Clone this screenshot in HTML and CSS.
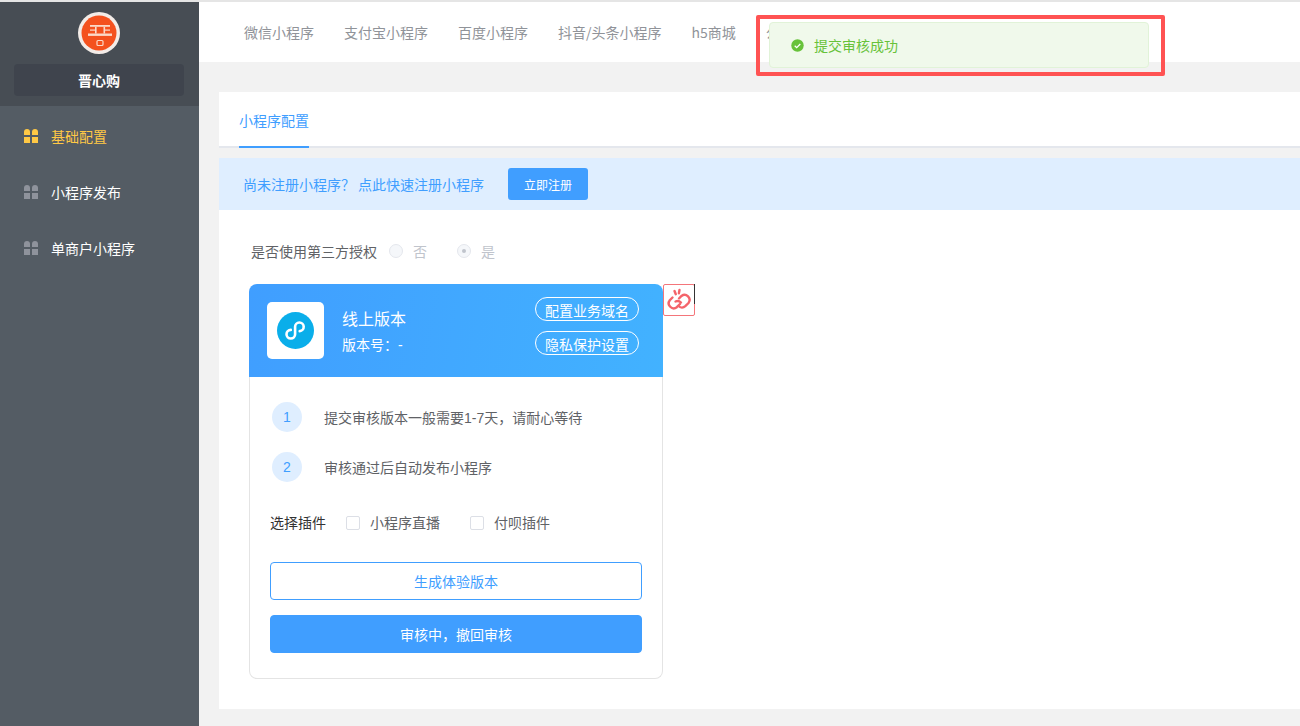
FILE: index.html
```html
<!DOCTYPE html>
<html lang="en">
<head>
    <meta charset="UTF-8">
    <meta name="viewport" content="width=device-width, initial-scale=1.0">
    <title>小程序配置</title>
    <link rel="stylesheet" href="styles.css">
</head>
<body>
    <div class="app">
        <aside class="sidebar">
            <div class="brand">
                <svg class="brand-logo" viewBox="0 0 42 42">
                    <circle cx="21" cy="21" r="21" fill="#f3ece8"/>
                    <circle cx="21" cy="21" r="17.5" fill="#f4511e"/>
                    <g fill="#fbd9c8">
                        <rect x="12" y="13" width="20" height="1.8"/>
                        <rect x="10" y="21.5" width="24" height="2.4"/>
                        <rect x="17" y="14.8" width="1.6" height="6.7"/>
                        <rect x="25.5" y="14.8" width="1.6" height="6.7"/>
                        <rect x="12" y="17.5" width="5" height="1.2"/>
                        <rect x="27" y="17.5" width="5" height="1.2"/>
                    </g>
                    <rect x="19" y="28.5" width="6" height="5" rx="1" fill="none" stroke="#fbd9c8" stroke-width="1.2"/>
                </svg>
                <div class="brand-name">晋心购</div>
            </div>
            <nav class="menu">
                <a class="menu-item active"><span class="grid-icon"><i></i><i></i><i></i><i></i></span>基础配置</a>
                <a class="menu-item"><span class="grid-icon"><i></i><i></i><i></i><i></i></span>小程序发布</a>
                <a class="menu-item"><span class="grid-icon"><i></i><i></i><i></i><i></i></span>单商户小程序</a>
            </nav>
        </aside>
        <main class="main">
            <div class="top-tabs">
                <a>微信小程序</a>
                <a>支付宝小程序</a>
                <a>百度小程序</a>
                <a>抖音/头条小程序</a>
                <a>h5商城</a>
                <a>公众号</a>
            </div>
            <div class="content">
                <div class="panel-tabs">
                    <span class="panel-tab">小程序配置</span>
                </div>
                <div class="notice">
                    <span>尚未注册小程序？</span>
                    <span class="notice-link">点此快速注册小程序</span>
                    <button class="notice-btn">立即注册</button>
                </div>
                <div class="panel-body">
                    <div class="auth-row">
                        <span class="auth-label">是否使用第三方授权</span>
                        <span class="radio"></span><span class="radio-text">否</span>
                        <span class="radio checked"></span><span class="radio-text">是</span>
                    </div>
                    <div class="version-card">
                        <div class="card-head">
                            <div class="app-icon">
                                <svg viewBox="0 0 37 37" width="37" height="37">
                                    <circle cx="18.5" cy="18.5" r="18.5" fill="#0aaeea"/>
                                    <path d="M13.8 17.9a4.3 4.3 0 1 0 4.3 4.3v-7.4a4.3 4.3 0 1 1 4.6 4.3" fill="none" stroke="#fff" stroke-width="2.6" stroke-linecap="round"/>
                                </svg>
                            </div>
                            <div class="card-info">
                                <div class="card-title">线上版本</div>
                                <div class="card-version">版本号：-</div>
                            </div>
                            <div class="card-links">
                                <a>配置业务域名</a>
                                <a>隐私保护设置</a>
                            </div>
                        </div>
                        <div class="card-body">
                            <div class="step"><span class="step-num">1</span>提交审核版本一般需要1-7天，请耐心等待</div>
                            <div class="step"><span class="step-num">2</span>审核通过后自动发布小程序</div>
                            <div class="plugins">
                                <span class="plugins-label">选择插件</span>
                                <span class="checkbox"></span><span class="plugin-name">小程序直播</span>
                                <span class="checkbox"></span><span class="plugin-name">付呗插件</span>
                            </div>
                            <button class="btn btn-outline">生成体验版本</button>
                            <button class="btn btn-solid">审核中，撤回审核</button>
                        </div>
                        <div class="link-badge">
                            <svg viewBox="0 0 30 30" width="30" height="30">
                                <g fill="none" stroke="#f4646a" stroke-width="2.4" stroke-linecap="round">
                                    <path d="M8.5 12.5l-2.7 2.7a5 5 0 0 0 7 7l3.2-3.2"/>
                                    <path d="M11.5 16.5a5 5 0 0 1 5.5 1"/>
                                    <path d="M15 13.5l2.5-2.5a5 5 0 0 1 7 7l-3.2 3.2a5 5 0 0 1-6.8-.2"/>
                                    <path d="M10.5 6l1.3 3.2M15.5 5l-.6 3.2"/>
                                </g>
                            </svg>
                        </div>
                    </div>
                </div>
            </div>
        </main>
    </div>

    <div class="toast-mark">
        <div class="toast">
            <svg viewBox="0 0 13 13" width="13" height="13">
                <circle cx="6.5" cy="6.5" r="6.2" fill="#67c23a"/>
                <path d="M3.7 6.7l2 1.9 3.6-3.6" fill="none" stroke="#fff" stroke-width="1.3"/>
            </svg>
            <span>提交审核成功</span>
        </div>
    </div>
</body>
</html>
```

FILE: styles.css
```css
* {
    box-sizing: border-box;
}

html,
body {
    margin: 0;
    height: 726px;
    overflow: hidden;
}

body {
    font-family: "Liberation Sans", "Noto Sans CJK SC", sans-serif;
    font-size: 14px;
    color: #606266;
    background-color: #f2f2f2;
    border-top: 2px solid #e5e5e5;
}

.app {
    display: flex;
    height: 724px;
}

/* sidebar */
.sidebar {
    width: 199px;
    flex-shrink: 0;
    background-color: #545c64;
}

.brand {
    height: 104px;
    padding: 10px 15px 0 14px;
    background-color: #474d54;
}

.brand-logo {
    display: block;
    width: 42px;
    height: 42px;
    margin: 0 auto 10px auto;
}

.brand-name {
    width: 170px;
    height: 32px;
    line-height: 34px;
    text-align: center;
    color: #fff;
    font-weight: bold;
    background-color: #3f444d;
    border-radius: 4px;
}

.menu {
    padding-top: 2px;
}

.menu-item {
    display: flex;
    align-items: center;
    height: 56px;
    padding-left: 24px;
    color: #fff;
}

.menu-item.active {
    color: #ffc845;
}

.grid-icon {
    display: grid;
    grid-template-columns: 6px 6px;
    grid-template-rows: 6px 6px;
    gap: 2px;
    width: 14px;
    margin-right: 13px;
}

.grid-icon i {
    background-color: #8f939c;
}

.grid-icon i:nth-child(-n+2) {
    border-radius: 3px 3px 0 0;
}

.active .grid-icon i {
    background-color: #ffc845;
}

/* top tabs */
.main {
    flex: 1;
    min-width: 0;
}

.top-tabs {
    display: flex;
    gap: 30px;
    height: 60px;
    padding-left: 45px;
    line-height: 60px;
    font-family: "Noto Sans CJK SC", sans-serif;
    color: #909399;
    background-color: #fff;
}

.content {
    height: 647px;
    margin: 30px 0 0 20px;
    background-color: #f2f2f2;
}

.panel-tabs {
    height: 56px;
    padding-left: 20px;
    background-color: #fff;
    border-bottom: 2px solid #e4e7ed;
}

.panel-tab {
    display: block;
    width: 70px;
    height: 56px;
    line-height: 58px;
    color: #409eff;
    border-bottom: 2px solid #409eff;
}

.notice {
    display: flex;
    align-items: center;
    height: 52px;
    margin-top: 10px;
    padding-left: 24px;
    color: #409eff;
    background-color: #dfeeff;
}

.notice-link {
    margin-left: 3px;
}

.notice-btn {
    width: 80px;
    height: 32px;
    margin-left: 24px;
    padding: 0;
    border: none;
    border-radius: 3px;
    color: #fff;
    font-family: inherit;
    font-size: 12px;
    background-color: #409eff;
}

.panel-body {
    height: 499px;
    padding: 31px 0 0 30px;
    background-color: #fff;
}

.auth-row {
    display: flex;
    align-items: center;
    height: 20px;
    margin-bottom: 23px;
    padding-left: 2px;
}

.auth-label {
    margin-right: 12px;
}

.radio {
    width: 14px;
    height: 14px;
    border: 1px solid #e4e7ed;
    border-radius: 50%;
    background-color: #f5f7fa;
    margin-right: 10px;
}

.radio.checked {
    position: relative;
}

.radio.checked::after {
    content: "";
    position: absolute;
    top: 4px;
    left: 4px;
    width: 4px;
    height: 4px;
    border-radius: 50%;
    background-color: #c0c4cc;
}

.radio-text {
    width: 44px;
    color: #c0c4cc;
}

/* version card */
.version-card {
    position: relative;
    width: 414px;
}

.card-head {
    display: flex;
    align-items: center;
    height: 93px;
    padding: 0 24px 0 18px;
    color: #fff;
    border-radius: 8px 8px 0 0;
    background: linear-gradient(100deg, #409eff, #42b2ff);
}

.app-icon {
    display: flex;
    align-items: center;
    justify-content: center;
    width: 57px;
    height: 57px;
    border-radius: 5px;
    background-color: #fff;
}

.card-info {
    flex: 1;
    margin-left: 18px;
    padding-top: 2px;
}

.card-title {
    font-size: 16px;
    line-height: 24px;
    margin-bottom: 3px;
}

.card-version {
    line-height: 20px;
}

.card-links {
    display: flex;
    flex-direction: column;
    gap: 10px;
    align-self: flex-start;
    margin-top: 13px;
}

.card-links a {
    width: 104px;
    height: 24px;
    line-height: 26px;
    text-align: center;
    border: 1px solid #fff;
    border-radius: 12px;
}

.card-body {
    height: 302px;
    padding: 25px 20px 0 20px;
    border: 1px solid #e4e4e4;
    border-top: none;
    border-radius: 0 0 8px 8px;
}

.step {
    display: flex;
    align-items: center;
    height: 30px;
    margin: 0 0 20px 2px;
}

.step-num {
    width: 30px;
    height: 30px;
    margin-right: 22px;
    line-height: 30px;
    text-align: center;
    color: #409eff;
    border-radius: 50%;
    background-color: #dfeeff;
}

.plugins {
    display: flex;
    align-items: center;
    height: 20px;
    margin: 31px 0 29px 0;
}

.plugins-label {
    margin-right: 20px;
    padding-bottom: 2px;
    color: #333;
}

.checkbox {
    width: 14px;
    height: 14px;
    margin-right: 10px;
    border: 1px solid #dcdfe6;
    border-radius: 2px;
}

.plugin-name {
    margin-right: 30px;
    padding-bottom: 2px;
}

.btn {
    display: block;
    width: 372px;
    height: 38px;
    padding: 0;
    border-radius: 4px;
    font-family: inherit;
    font-size: 14px;
}

.btn-outline {
    margin-bottom: 15px;
    color: #409eff;
    border: 1px solid #409eff;
    background-color: #fff;
}

.btn-solid {
    color: #fff;
    border: 1px solid #409eff;
    background-color: #409eff;
}

/* sits on the card's right edge */
.link-badge {
    position: absolute;
    top: 0;
    left: 414px;
    width: 32px;
    height: 32px;
    border: 1px solid #f4757a;
    border-radius: 2px;
    background-color: #fff;
}

.link-badge::after {
    content: "";
    position: absolute;
    top: -1px;
    right: -1px;
    width: 1px;
    height: 20px;
    background-color: #333;
}

/* toast and the red mark drawn round it */
.toast-mark {
    position: absolute;
    top: 15px;
    left: 756px;
    width: 409px;
    height: 61px;
    border: 4px solid #ff5353;
    border-radius: 2px;
}

.toast {
    position: absolute;
    top: 3px;
    left: 9px;
    display: flex;
    align-items: center;
    gap: 10px;
    width: 380px;
    height: 46px;
    padding-left: 21px;
    color: #67c23a;
    border: 1px solid #e1f3d8;
    border-radius: 4px;
    background-color: #f0f9eb;
}
```
